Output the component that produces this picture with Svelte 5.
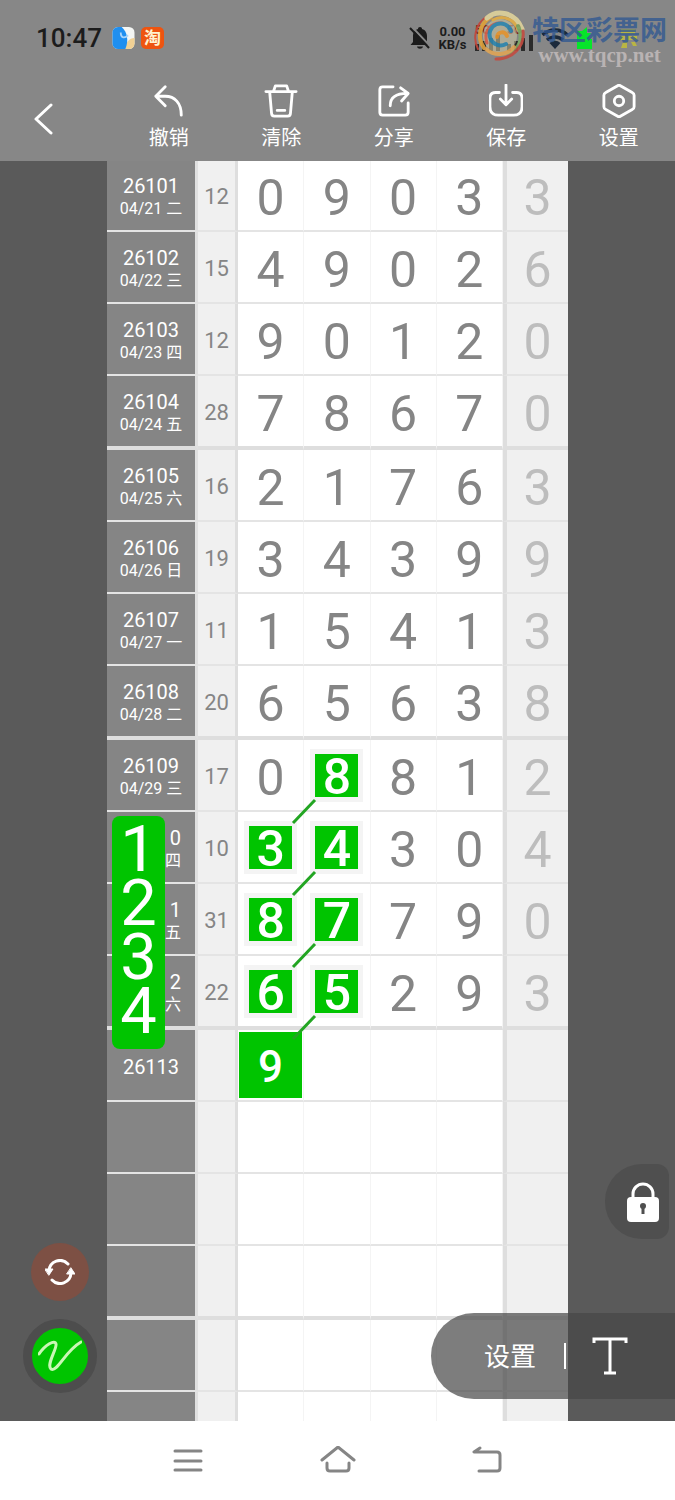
<script lang="ts">
  interface Draw {
    issue: string;
    date?: string;
    sum?: number;
    digits: string;
    tail?: string;
    covered?: boolean;
  }

  // covered rows sit behind the note, only the end of their label stays visible
  const draws: Draw[] = [
    { issue: '26101', date: '04/21 二', sum: 12, digits: '0903', tail: '3' },
    { issue: '26102', date: '04/22 三', sum: 15, digits: '4902', tail: '6' },
    { issue: '26103', date: '04/23 四', sum: 12, digits: '9012', tail: '0' },
    { issue: '26104', date: '04/24 五', sum: 28, digits: '7867', tail: '0' },
    { issue: '26105', date: '04/25 六', sum: 16, digits: '2176', tail: '3' },
    { issue: '26106', date: '04/26 日', sum: 19, digits: '3439', tail: '9' },
    { issue: '26107', date: '04/27 一', sum: 11, digits: '1541', tail: '3' },
    { issue: '26108', date: '04/28 二', sum: 20, digits: '6563', tail: '8' },
    { issue: '26109', date: '04/29 三', sum: 17, digits: '0881', tail: '2' },
    { issue: '0', date: '四', sum: 10, digits: '3430', tail: '4', covered: true },
    { issue: '1', date: '五', sum: 31, digits: '8779', tail: '0', covered: true },
    { issue: '2', date: '六', sum: 22, digits: '6529', tail: '3', covered: true },
    { issue: '26113', digits: '9   ' },
    { issue: '', digits: '    ' },
    { issue: '', digits: '    ' },
    { issue: '', digits: '    ' },
    { issue: '', digits: '    ' },
    { issue: '', digits: '    ' }
  ];

  // row-column of every highlighted digit
  const marks = new Set(['8-1', '9-0', '9-1', '10-0', '10-1', '11-0', '11-1']);
  const guess = '12-0';
  // marks joined to the cell below and to the left
  const links = new Set(['8-1', '9-1', '10-1', '11-1']);

  const note = ['1', '2', '3', '4'];

  const tools = [
    { name: 'undo', label: '撤销' },
    { name: 'clear', label: '清除' },
    { name: 'share', label: '分享' },
    { name: 'save', label: '保存' },
    { name: 'settings', label: '设置' }
  ];
</script>

<div class="app">
  <header>
    <div class="status">
      <span class="time">10:47</span>
      <svg class="app-icon" viewBox="0 0 24 24">
        <rect width="24" height="24" rx="6" fill="#f4f6f4" />
        <path d="M13 24h5a6 6 0 0 0 6-6v-6c-6 0-9 5-11 12z" fill="#f2d194" />
        <path d="M6 0h4c6 5 8 15 4 24H6a6 6 0 0 1-6-6V6a6 6 0 0 1 6-6z" fill="#1f8ff0" />
        <path d="M9 6c0 7 5 6 8 3" fill="none" stroke="#a8d4fa" stroke-width="2" />
      </svg>
      <span class="taobao">淘</span>
      <span class="spacer"></span>
      <svg class="bell" viewBox="0 0 22 24">
        <path d="M11 1c1.300 0 2 .8 2 2 3.500 1 5 4 5 7v6l2.500 3h-19L4 16v-6c0-3 1.500-6 5-7 0-1.200.7-2 2-2zM8 20.500h6c-.5 3-5.500 3-6 0z" fill="#1c1c1c" />
        <path d="M3 1l19 20" stroke="#878787" stroke-width="2" />
        <path d="M1 2l19 20" stroke="#1c1c1c" stroke-width="2" />
      </svg>
      <span class="speed">0.00<br />KB/s</span>
      <svg class="signal" viewBox="0 0 60 30">
        <g fill="#7d2b22" font-size="12" font-weight="700" font-family="Roboto, sans-serif">
          <text x="0" y="11">5G</text>
          <text x="32" y="11">5G</text>
        </g>
        <path d="M2 28v-7M9 28V18M16 28V15M23 28V12M34 28v-7M41 28V18M48 28V15M56 28V12" stroke="#2b2b2b" stroke-width="4" />
      </svg>
      <svg class="wifi" viewBox="0 0 28 24">
        <path d="M1.500 9a18 18 0 0 1 25 0M6 14a12 12 0 0 1 16 0" fill="none" stroke="#1b2a3c" stroke-width="3.500" />
        <path d="M8.500 17a8 8 0 0 1 11 0L14 23z" fill="#1b2a3c" />
      </svg>
      <svg class="battery" viewBox="0 0 64 24">
        <path d="M2 5h5l5-4v6h4l-3 6h4v10H2z" fill="#06e52b" />
        <path d="M46 3h14v5H46zM45 10h17v4H45zM48 16h4v6h-6zM56 16h4l2 4h-4z" fill="#b9b544" />
      </svg>
      <div class="watermark">
        <svg viewBox="0 0 54 54">
          <circle cx="27" cy="27" r="17" fill="#d2cba4" opacity="0.600" />
          <g fill="none" stroke-linecap="round">
            <path d="M5 40A25 25 0 0 1 13 8" stroke="#c4463a" stroke-width="2" />
            <path d="M11 39A21 21 0 0 1 18 8" stroke="#e0a23a" stroke-width="4" />
            <path d="M14 9C24 0 42 3 49 20" stroke="#dfd39c" stroke-width="5" />
            <path d="M20 11c10-6 22 0 25 10" stroke="#e3ae45" stroke-width="3" />
            <path d="M45 17c6 12 1 23-8 28" stroke="#7faa66" stroke-width="4" />
            <path d="M50 22c2 15-10 28-27 28" stroke="#c34c41" stroke-width="3" />
            <path d="M41 38c-7 9-20 9-28 2" stroke="#e0a556" stroke-width="4" />
            <path d="M14 34c-4-12 4-21 15-20" stroke="#d9604a" stroke-width="3" />
            <path d="M33 35a11 11 0 1 1 5-13" stroke="#2f87b0" stroke-width="4" />
            <path d="M24 28c1-6 8-6 10-1" stroke="#e8962f" stroke-width="4" />
          </g>
        </svg>
        <div>
          <b>特区彩票网</b>
          <i>www.tqcp.net</i>
        </div>
      </div>
    </div>

    <nav class="tools">
      <button class="back" aria-label="返回">
        <svg viewBox="0 0 20 32"><path d="M17 2L2 16l15 14" /></svg>
      </button>
      {#each tools as tool}
        <button class="tool">
          <svg viewBox="0 0 36 36">
            {#if tool.name === 'undo'}
              <path d="M14 3L4 13l10 10M4 13h10c10 0 17 7 17 20" />
            {:else if tool.name === 'clear'}
              <path d="M2 8h32M10 8l2-6h12l2 6M6 8l2 23q0 3 3 3h14q3 0 3-3l2-23M14 28h8" />
            {:else if tool.name === 'share'}
              <path d="M17 3H6Q3 3 3 6v24q0 3 3 3h24q3 0 3-3V20M14 23c0-9 6-13 18-13M25 4l8 6-7 8" />
            {:else if tool.name === 'save'}
              <path d="M11 9H7q-6 0-6 6v9q0 9 9 9h16q9 0 9-9v-9q0-6-6-6h-4M18 1v20M12 16l6 6 6-6" />
            {:else}
              <path d="M18 1l14 8q2 1 2 3v12q0 2-2 3l-14 8-14-8q-2-1-2-3V12q0-2 2-3z" />
              <circle cx="18" cy="18" r="5" />
            {/if}
          </svg>
          {tool.label}
        </button>
      {/each}
    </nav>
  </header>

  <main>
    <table>
      <colgroup>
        <col class="col-issue" />
        <col class="col-sum" />
        <col span="4" />
        <col class="col-tail" />
      </colgroup>
      <tbody>
        {#each draws as draw, row}
          <tr class:group-end={row % 4 === 3}>
            <th scope="row" class:covered={draw.covered}>
              {draw.issue}
              {#if draw.date}<small>{draw.date}</small>{/if}
            </th>
            <td class="sum">{draw.sum ?? ''}</td>
            {#each draw.digits.split('') as digit, column}
              {@const key = `${row}-${column}`}
              <td class="digit" class:marked={marks.has(key) || key === guess}>
                {#if marks.has(key)}
                  <mark>{digit}</mark>
                {:else if key === guess}
                  <mark class="guess">{digit}</mark>
                {:else}
                  {digit}
                {/if}
                {#if links.has(key)}
                  <svg class="link" viewBox="0 0 24 24"><path d="M23 1L1 24" /></svg>
                {/if}
              </td>
            {/each}
            <td class="tail">{draw.tail ?? ''}</td>
          </tr>
        {/each}
      </tbody>
    </table>

    <div class="note">
      {#each note as line}<span>{line}</span>{/each}
    </div>

    <div class="brushes">
      <button class="swap" aria-label="切换">
        <svg viewBox="0 0 30 26">
          <path d="M4 12A11 11 0 0 1 23 5M26 14A11 11 0 0 1 7 21" />
          <path class="head" d="M0 10h8l-4 6zM22 15h8l-4-6z" />
        </svg>
      </button>
      <button class="pen" aria-label="画笔">
        <svg viewBox="0 0 44 32">
          <path d="M1 14C7 5 17-1 18 4c1 5-10 21-5 25 6 4 14-18 30-27" />
        </svg>
      </button>
    </div>

    <button class="lock" aria-label="锁定">
      <svg viewBox="0 0 34 40">
        <path d="M7 17V12a10 10 0 0 1 20 0v5" fill="none" stroke="#fff" stroke-width="3" />
        <rect x="1" y="15" width="32" height="25" rx="4" fill="#fff" />
        <circle cx="17" cy="24" r="3" fill="#4f4f4f" />
        <path d="M17 24v8" stroke="#4f4f4f" stroke-width="3" />
      </svg>
    </button>

    <div class="text-bar">
      <button class="text-settings">设置</button>
      <button class="text-tool" aria-label="文字">
        <svg viewBox="0 0 36 38">
          <path d="M2 6V2h32v4M18 2v34M12 36h12" />
        </svg>
      </button>
    </div>
  </main>

  <footer>
    <button aria-label="菜单">
      <svg viewBox="0 0 36 30"><path d="M5 5h26M5 15h26M5 24h26" /></svg>
    </button>
    <button aria-label="主页">
      <svg viewBox="0 0 36 30"><path d="M2 14L18 1l16 13M7 17v5q0 3 3 3h16q3 0 3-3v-5" /></svg>
    </button>
    <button aria-label="返回">
      <svg viewBox="0 0 36 30"><path d="M10 2L4 6h23q3 0 3 3v13q0 3-3 3H9" /></svg>
    </button>
  </footer>
</div>

<style>
  :global(body) {
    margin: 0;
  }

  .app {
    display: flex;
    flex-direction: column;
    height: 100vh;
    overflow: hidden;
    background-color: #5a5a5a;
    font-family: Roboto, 'Noto Sans CJK SC', sans-serif;
  }

  button {
    border: none;
    padding: 0;
    background: none;
    color: white;
    font: inherit;
  }

  svg {
    display: block;
  }

  header {
    flex: none;
    background-color: #878787;
  }

  .status {
    position: relative;
    display: flex;
    align-items: center;
    height: 76px;
    padding: 0 36px;
    color: #1c1c1c;
  }

  .time {
    font-size: 26px;
    font-weight: 500;
    margin-right: 10px;
  }

  .app-icon {
    width: 23px;
    height: 22px;
    margin-right: 6px;
  }

  .taobao {
    width: 23px;
    height: 22px;
    border-radius: 5px;
    background-color: #ee5410;
    color: #fff3d0;
    font-size: 17px;
    font-weight: 700;
    line-height: 22px;
    text-align: center;
  }

  .spacer {
    flex: 1;
  }

  .bell {
    width: 22px;
    height: 24px;
    margin-right: 6px;
  }

  .speed {
    width: 31px;
    margin-right: 7px;
    font-size: 13px;
    font-weight: 700;
    line-height: 13px;
    text-align: center;
  }

  .signal {
    width: 60px;
    height: 30px;
    margin-right: 6px;
  }

  .wifi {
    width: 28px;
    height: 24px;
    margin-right: 6px;
  }

  .battery {
    width: 64px;
    height: 24px;
  }

  .watermark {
    position: absolute;
    top: 9px;
    right: 8px;
    display: flex;
    gap: 5px;

    svg {
      width: 54px;
      height: 54px;
      opacity: 0.9;
    }

    b,
    i {
      display: block;
      font-style: normal;
      text-align: center;
      white-space: nowrap;
    }

    b {
      margin-top: 6px;
      color: rgba(48, 88, 146, 0.8);
      font-size: 27px;
      line-height: 32px;
    }

    i {
      color: #b9b3b3;
      font-family: 'Liberation Serif', serif;
      font-size: 21px;
      font-weight: 700;
      line-height: 16px;
    }
  }

  .tools {
    display: flex;
    height: 85px;

    button {
      flex: 1;
    }

    svg {
      fill: none;
      stroke: white;
      stroke-width: 3;
      stroke-linecap: round;
      stroke-linejoin: round;
    }
  }

  .back svg {
    width: 20px;
    height: 32px;
    margin-left: 34px;
  }

  .tool {
    display: flex;
    flex-direction: column;
    align-items: center;
    gap: 5px;
    padding-top: 8px;
    font-size: 20px;
    line-height: 30px;

    svg {
      width: 34px;
      height: 34px;
    }
  }

  main {
    flex: 1;
    min-height: 0;
    position: relative;
    overflow: hidden;
  }

  table {
    width: calc(100% - 214px);
    margin: -1px auto 0;
    table-layout: fixed;
    border-collapse: separate;
    border-spacing: 0;
    background-color: white;
    color: #858585;
  }

  .col-issue {
    width: 91px;
  }

  .col-sum {
    width: 40px;
  }

  .col-tail {
    width: 65px;
  }

  th,
  td {
    box-sizing: border-box;
    height: 72px;
    padding: 4px 0 0;
    border-bottom: 2px solid #e4e4e4;
    text-align: center;
    font-weight: 400;
  }

  .group-end th,
  .group-end td {
    height: 74px;
    border-bottom: 4px solid #dedede;
  }

  th {
    border-right: 3px solid #e0e0e0;
    background-color: #858585;
    color: white;
    font-size: 20px;
    line-height: 24px;

    small {
      display: block;
      font-size: 16px;
      line-height: 22px;
    }
  }

  .covered {
    padding-right: 14px;
    text-align: right;
  }

  .sum {
    padding-top: 2px;
    border-right: 3px solid #dedede;
    background-color: #f0f0f0;
    font-size: 22px;
  }

  .digit {
    position: relative;
    border-right: 1px solid #f4f4f4;
  }

  .digit,
  .tail {
    padding-top: 5px;
    font-size: 50px;
    line-height: 56px;
  }

  .tail {
    border-left: 4px solid #dedede;
    background-color: #f0f0f0;
    color: #bdbdbd;
  }

  .marked {
    padding: 0;
  }

  mark {
    display: block;
    box-sizing: border-box;
    width: 43px;
    height: 43px;
    margin: 0 auto;
    padding-top: 2px;
    background-color: #00c400;
    box-shadow: 0 0 0 5px #f4f4f4;
    color: white;
    font-weight: 500;
    line-height: 43px;
  }

  .guess {
    width: auto;
    height: 66px;
    margin: 0 1px;
    box-shadow: none;
    font-size: 44px;
    line-height: 66px;
  }

  .link {
    position: absolute;
    z-index: 1;
    top: 59px;
    left: -12px;
    width: 24px;
    height: 24px;
    overflow: visible;
    fill: none;
    stroke: #22a522;
    stroke-width: 3;
  }

  /* text written over the board */
  .note {
    position: absolute;
    top: 655px;
    left: 112px;
    display: flex;
    flex-direction: column;
    width: 53px;
    padding: 6px 0 11px;
    border-radius: 8px;
    background-color: #00c400;
    color: white;
    font-size: 65px;
    line-height: 54px;
    text-align: center;
  }

  .brushes {
    position: absolute;
    left: 23px;
    bottom: 28px;
    display: flex;
    flex-direction: column;
    align-items: center;
    gap: 18px;

    button {
      display: flex;
      align-items: center;
      justify-content: center;
      border-radius: 50%;
    }

    svg {
      fill: none;
      stroke: white;
      stroke-width: 3;
      stroke-linecap: round;
    }
  }

  .swap {
    width: 58px;
    height: 58px;
    background-color: #7d5044;

    svg {
      width: 30px;
      height: 26px;
    }

    .head {
      fill: white;
      stroke-width: 1;
    }
  }

  .pen {
    box-sizing: border-box;
    width: 74px;
    height: 74px;
    border: 9px solid #4d4d4d;
    background-color: #00c400;

    svg {
      width: 44px;
      height: 32px;
      stroke: #c9f7b4;
    }
  }

  .lock {
    position: absolute;
    right: 6px;
    bottom: 182px;
    display: flex;
    align-items: center;
    justify-content: flex-end;
    width: 64px;
    height: 75px;
    padding-right: 9px;
    box-sizing: border-box;
    border-radius: 37px 12px 12px 37px;
    background-color: #4f4f4f;

    svg {
      width: 34px;
      height: 40px;
    }
  }

  .text-bar {
    position: absolute;
    right: 0;
    bottom: 22px;
    display: flex;
    align-items: center;
    box-sizing: border-box;
    width: 244px;
    height: 86px;
    padding-left: 53px;
    border-radius: 43px 0 0 43px;
    background-color: rgba(70, 70, 70, 0.7);
  }

  .text-settings {
    width: 82px;
    height: 26px;
    border-right: 2px solid white;
    font-size: 26px;
    line-height: 28px;
    text-align: left;
  }

  .text-tool {
    margin-left: 26px;

    svg {
      width: 36px;
      height: 40px;
      fill: none;
      stroke: white;
      stroke-width: 3;
    }
  }

  footer {
    flex: none;
    display: flex;
    justify-content: center;
    align-items: center;
    gap: 114px;
    height: 79px;
    background-color: white;

    svg {
      width: 36px;
      height: 30px;
      fill: none;
      stroke: #858585;
      stroke-width: 3;
      stroke-linecap: round;
      stroke-linejoin: round;
    }
  }
</style>
